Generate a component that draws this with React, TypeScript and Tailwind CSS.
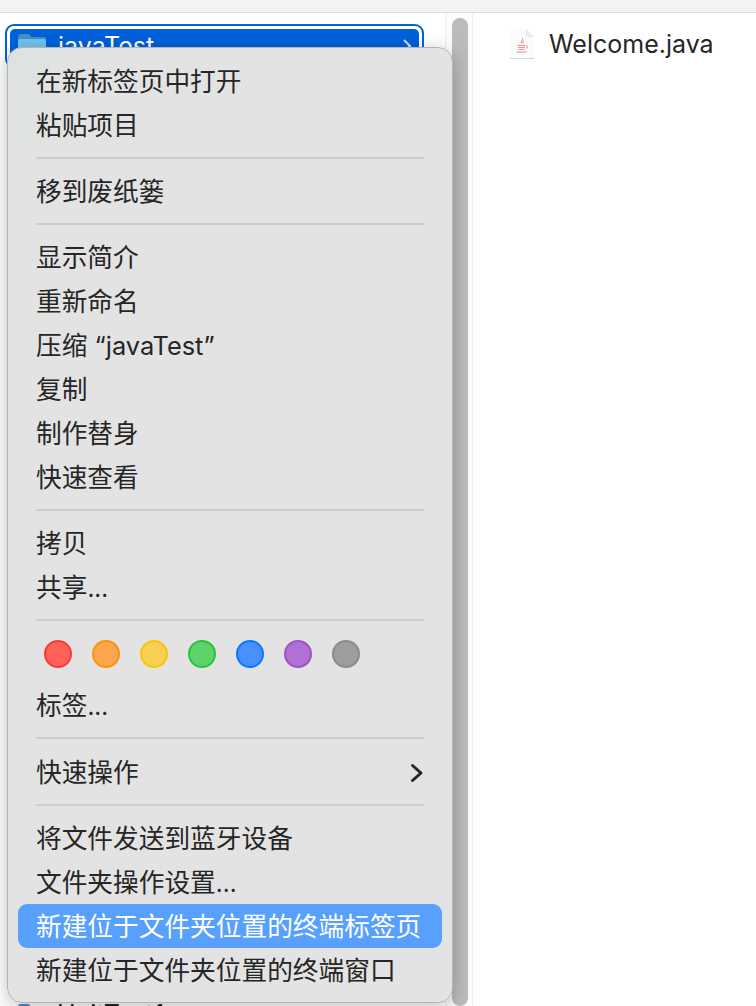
import type { ReactNode } from "react";

const sans = "font-['Inter','Noto_Sans_CJK_SC',sans-serif]";

function FolderIcon({ className }: { className: string }) {
  return (
    <svg viewBox="0 0 30 28" className={className}>
      <path d="M1 4.500C1 3 2 2 3.500 2h7c1 0 1.600.4 2.300 1.100L14.500 5H27c1.300 0 2 .8 2 2v3H1z" fill="#3d93c9" />
      <rect x="1" y="7" width="28" height="20" rx="2" fill="#72c1ee" />
    </svg>
  );
}

function JavaFileIcon() {
  return (
    <svg viewBox="0 0 26 32" className="h-[32px] w-[26px]">
      <path d="M1 1h16l8 8v21.500H1z" fill="#fbfbfb" />
      <path d="M17 1l8 8h-8z" fill="#ececec" />
      <path d="M1 30.500h24" stroke="#d9d9d9" strokeWidth="1" />
      <path d="M13.500 10c1.500 2-2.500 3-1 5.500M15 12.500c-1.500 1-1.500 2 -.5 3" stroke="#e2898a" strokeWidth="1" fill="none" />
      <path d="M8.500 17.500h8M9 19.500h7M9.500 21.500h6M7.500 24h10.500M17 18c2-.5 2.500 1.500 0 2.500" stroke="#ec8f90" strokeWidth="1" fill="none" />
    </svg>
  );
}

function Dots() {
  return <span className="text-[24px]">...</span>;
}

function Row({ label, chevron }: { label: ReactNode; chevron?: boolean }) {
  return (
    <div className="flex h-[44px] items-center justify-between px-[28px] pt-[2px] text-[25.7px] leading-none text-[#262626]">
      <span className="whitespace-nowrap">{label}</span>
      {chevron && (
        <svg viewBox="0 0 14 20" className="h-[20px] w-[14px]" fill="none" stroke="#262626" strokeWidth="3" strokeLinecap="round" strokeLinejoin="round">
          <path d="M2.500 2.500L11 10l-8.500 7.500" />
        </svg>
      )}
    </div>
  );
}

function Separator() {
  return (
    <div className="flex h-[22px] items-center px-[28px]">
      <div className="h-[2px] w-full bg-[#cdcdcd]" />
    </div>
  );
}

const tagColors = [
  "bg-[#ff6159] border-[#f53d33]",
  "bg-[#fba54d] border-[#f79414]",
  "bg-[#f7d052] border-[#f9c509]",
  "bg-[#5ed36a] border-[#27c43b]",
  "bg-[#4790fd] border-[#1079fb]",
  "bg-[#b26fd4] border-[#a152c8]",
  "bg-[#9d9da0] border-[#8b8b8e]",
];

function Menu() {
  return (
    <div className="absolute left-[7px] top-[47px] w-[446px] rounded-[15px] border border-[#b4b4b4] bg-gradient-to-br from-[#dde2e3] via-[#e3e3e3] via-[12%] to-[#e3e3e3] pb-[10px] pt-[11px] shadow-[0_4px_18px_rgba(0,0,0,0.25)]">
      <Row label="在新标签页中打开" />
      <Row label="粘贴项目" />
      <Separator />
      <Row label="移到废纸篓" />
      <Separator />
      <Row label="显示简介" />
      <Row label="重新命名" />
      <Row label={<>压缩 <span className="text-[25.4px]">“javaTest”</span></>} />
      <Row label="复制" />
      <Row label="制作替身" />
      <Row label="快速查看" />
      <Separator />
      <Row label="拷贝" />
      <Row label={<>共享<Dots /></>} />
      <Separator />
      <div className="flex h-[52px] items-center gap-[20px] px-[36px] pb-[6px]">
        {tagColors.map((c) => (
          <div key={c} className={`h-[28px] w-[28px] rounded-full border-2 ${c}`} />
        ))}
      </div>
      <Row label={<>标签<Dots /></>} />
      <Separator />
      <div className="pt-px">
        <Row label="快速操作" chevron />
      </div>
      <Separator />
      <Row label="将文件发送到蓝牙设备" />
      <Row label={<>文件夹操作设置<Dots /></>} />
      <div className="mx-[10px] flex h-[44px] items-center whitespace-nowrap rounded-[9px] bg-[#58a0fe] px-[18px] pt-[2px] text-[25.7px] leading-none text-white">
        新建位于文件夹位置的终端标签页
      </div>
      <Row label="新建位于文件夹位置的终端窗口" />
    </div>
  );
}

export default function App() {
  return (
    <div className={`relative flex h-[1006px] w-[756px] flex-col overflow-hidden bg-white ${sans}`}>
      <div className="h-[13px] shrink-0 border-b border-[#dcdcdc] bg-[#f3f3f2]" />
      <div className="flex min-h-0 flex-1">
        <div className="flex w-[446px] shrink-0 flex-col justify-between border-r border-[#eeeeee] px-[5px] pt-[11px]">
          <div className="h-[44px] w-[419px] rounded-[9px] border-2 border-[#0064e1] bg-white p-[3px]">
            <div className="flex h-full items-center justify-between rounded-[5px] bg-[#0060dc] pl-[7px] pr-[7px]">
              <div className="flex items-center gap-[11px]">
                <FolderIcon className="h-[28px] w-[30px]" />
                <span className="text-[25px] leading-none text-white">javaTest</span>
              </div>
              <svg viewBox="0 0 10 16" className="h-[16px] w-[10px]" fill="none" stroke="#cfe0f8" strokeWidth="2">
                <path d="M2 2l6 6-6 6" />
              </svg>
            </div>
          </div>
          <div className="flex h-[4px] items-start gap-[10px] pl-[12px]">
            <FolderIcon className="h-[28px] w-[30px] shrink-0" />
            <span className="text-[25px] leading-none text-[#262626]">UnitTest1</span>
          </div>
        </div>
        <div className="w-[27px] shrink-0 border-r border-[#eeeeee] bg-[#fcfcfc] px-[6px] pt-[5px]">
          <div className="h-full w-[16px] rounded-full bg-[#bbbbbb]" />
        </div>
        <div className="flex flex-1 items-start pl-[36px] pt-[15px]">
          <div className="flex items-center gap-[14px]">
            <JavaFileIcon />
            <span className="text-[25px] leading-none text-[#262626]">Welcome.java</span>
          </div>
        </div>
      </div>
      <Menu />
    </div>
  );
}
